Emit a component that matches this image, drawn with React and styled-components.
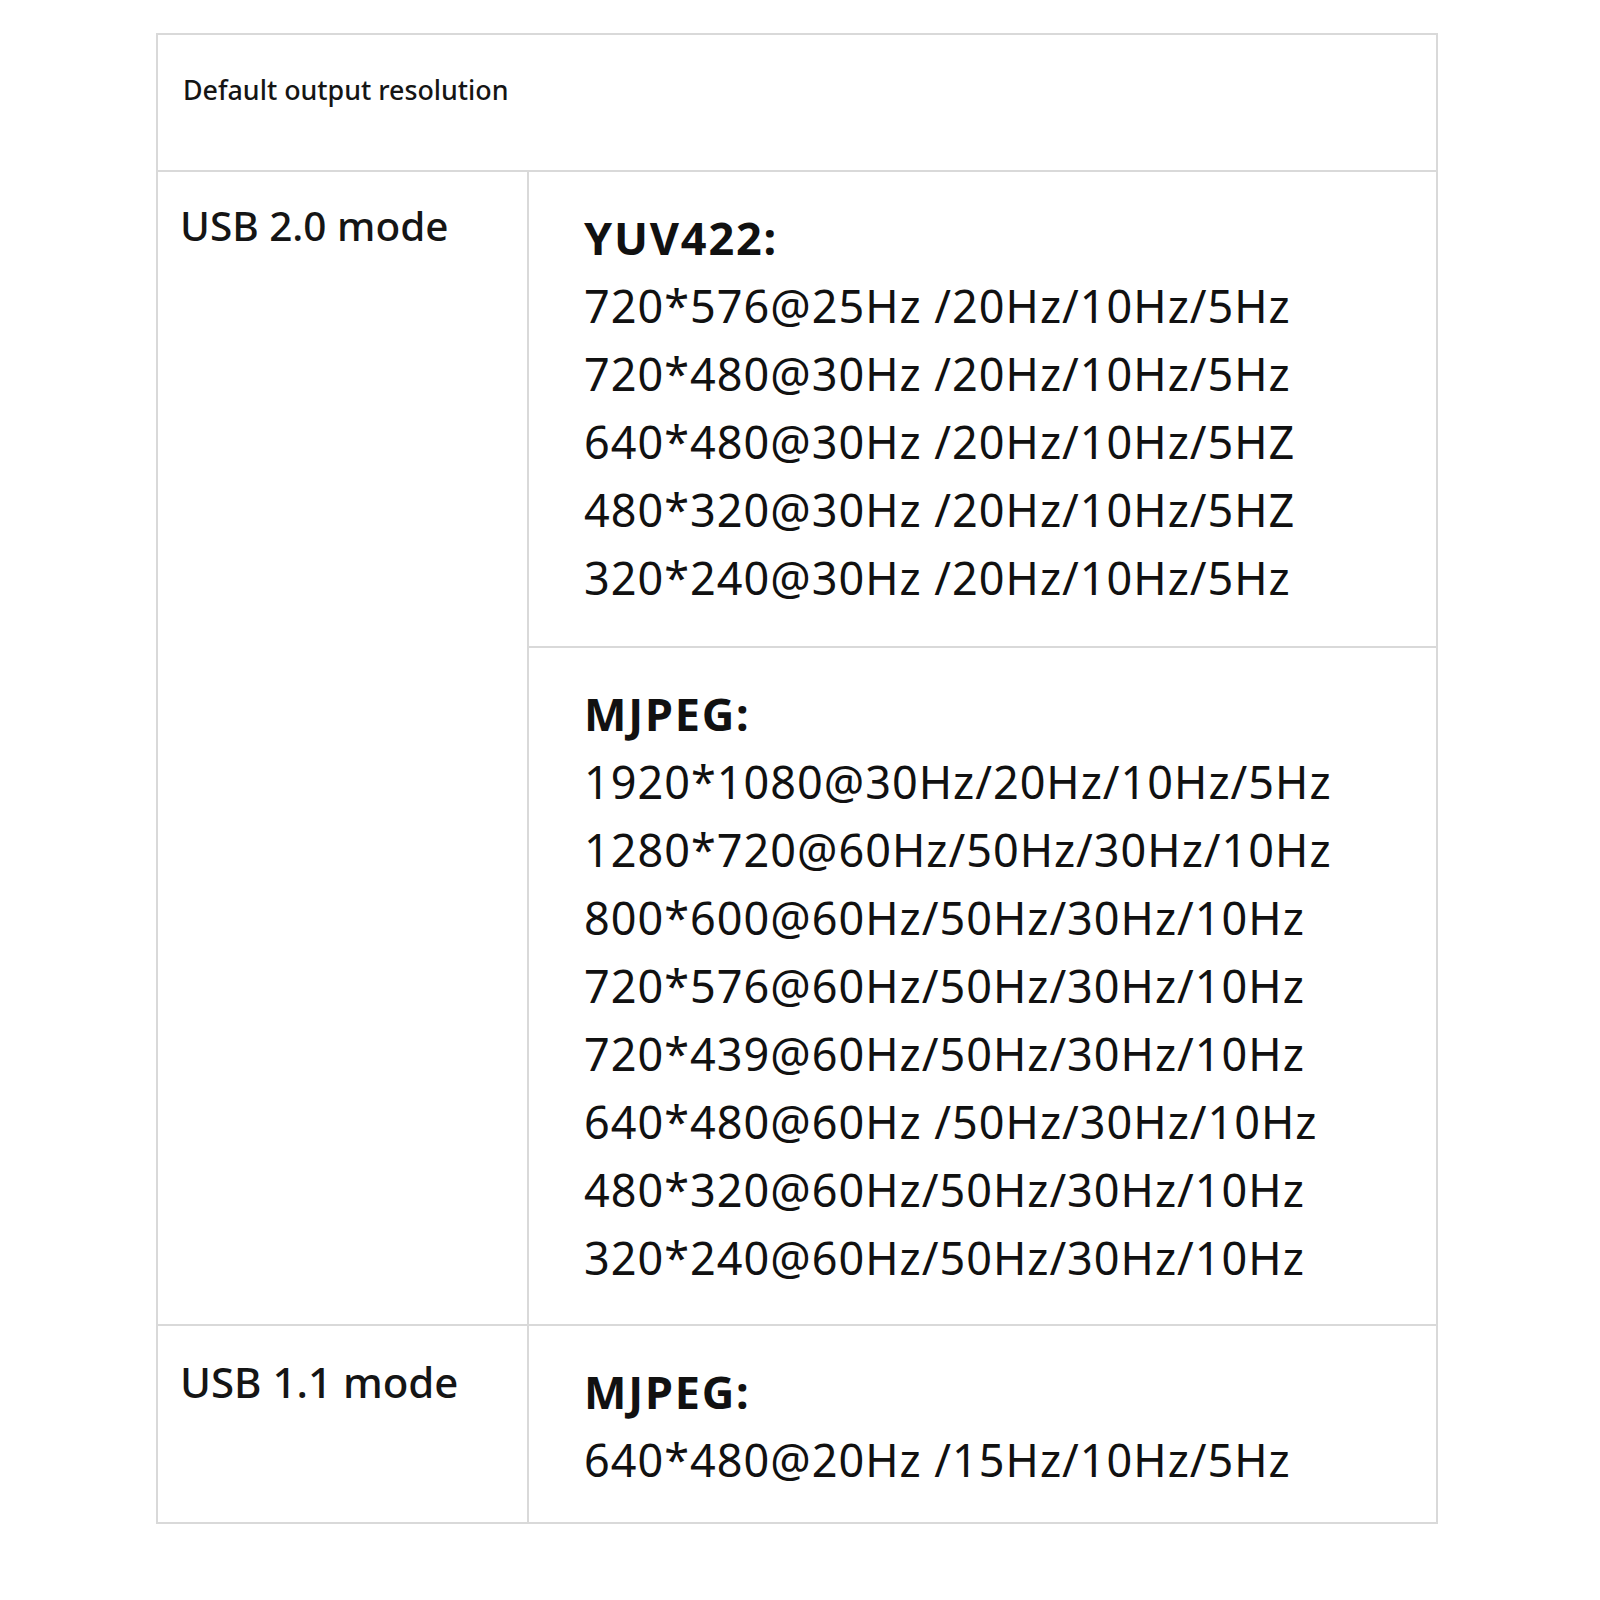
import React from "react";
import styled, { createGlobalStyle } from "styled-components";

const Global = createGlobalStyle`
  html, body { margin: 0; padding: 0; background: #ffffff; }
  body { font-family: "Noto Sans", "Open Sans", "Liberation Sans", sans-serif; color: #111111; }
`;

const Page = styled.div`
  width: 1600px;
  height: 1600px;
  box-sizing: border-box;
  padding: 33px 0 0 156px;
  background: #ffffff;
`;

const Table = styled.div`
  width: 1282px;
  box-sizing: border-box;
  border: 2px solid #d9d9d9;
  display: flex;
  flex-direction: column;
`;

const HeaderRow = styled.div`
  height: 137px;
  box-sizing: border-box;
  border-bottom: 2px solid #d9d9d9;
  padding: 36px 0 0 25px;
  font-size: 26.8px;
  line-height: 38px;
  font-weight: 500;
  color: #151515;
`;

const Row = styled.div`
  display: grid;
  grid-template-columns: 371px 1fr;
  border-bottom: ${(p) => (p.$last ? "none" : "2px solid #d9d9d9")};
`;

const LabelCell = styled.div`
  border-right: 2px solid #d9d9d9;
  padding: ${(p) => p.$pt}px 0 0 22px;
  font-size: ${(p) => p.$size}px;
  line-height: 54px;
  font-weight: 500;
  color: #151515;
`;

const ValueColumn = styled.div`
  display: flex;
  flex-direction: column;
`;

const ValueCell = styled.div`
  padding: 32px 0 ${(p) => p.$pb}px 55px;
  border-bottom: ${(p) => (p.$divider ? "2px solid #d9d9d9" : "none")};
`;

const Format = styled.div`
  font-size: 45px;
  font-weight: 700;
  line-height: 68px;
  letter-spacing: 1.8px;
  color: #111111;
`;

const Mode = styled.div`
  font-size: 45px;
  font-weight: 400;
  line-height: 68px;
  letter-spacing: 1px;
  color: #111111;
  white-space: nowrap;
`;

const yuv = [
  "720*576@25Hz /20Hz/10Hz/5Hz",
  "720*480@30Hz /20Hz/10Hz/5Hz",
  "640*480@30Hz /20Hz/10Hz/5HZ",
  "480*320@30Hz /20Hz/10Hz/5HZ",
  "320*240@30Hz /20Hz/10Hz/5Hz",
];

const mjpeg = [
  "1920*1080@30Hz/20Hz/10Hz/5Hz",
  "1280*720@60Hz/50Hz/30Hz/10Hz",
  "800*600@60Hz/50Hz/30Hz/10Hz",
  "720*576@60Hz/50Hz/30Hz/10Hz",
  "720*439@60Hz/50Hz/30Hz/10Hz",
  "640*480@60Hz /50Hz/30Hz/10Hz",
  "480*320@60Hz/50Hz/30Hz/10Hz",
  "320*240@60Hz/50Hz/30Hz/10Hz",
];

const usb11 = ["640*480@20Hz /15Hz/10Hz/5Hz"];

function FormatBlock({ title, modes, divider, pb }) {
  return (
    <ValueCell $divider={divider} $pb={pb}>
      <Format>{title}</Format>
      {modes.map((m) => (
        <Mode key={m}>{m}</Mode>
      ))}
    </ValueCell>
  );
}

export default function App() {
  return (
    <>
      <Global />
      <Page>
        <Table>
          <HeaderRow>Default output resolution</HeaderRow>
          <Row>
            <LabelCell $pt={27} $size={40.5}>USB 2.0 mode</LabelCell>
            <ValueColumn>
              <FormatBlock title="YUV422:" modes={yuv} divider pb={34} />
              <FormatBlock title="MJPEG:" modes={mjpeg} pb={32} />
            </ValueColumn>
          </Row>
          <Row $last>
            <LabelCell $pt={29} $size={42}>USB 1.1 mode</LabelCell>
            <ValueColumn>
              <FormatBlock title="MJPEG:" modes={usb11} pb={28} />
            </ValueColumn>
          </Row>
        </Table>
      </Page>
    </>
  );
}
